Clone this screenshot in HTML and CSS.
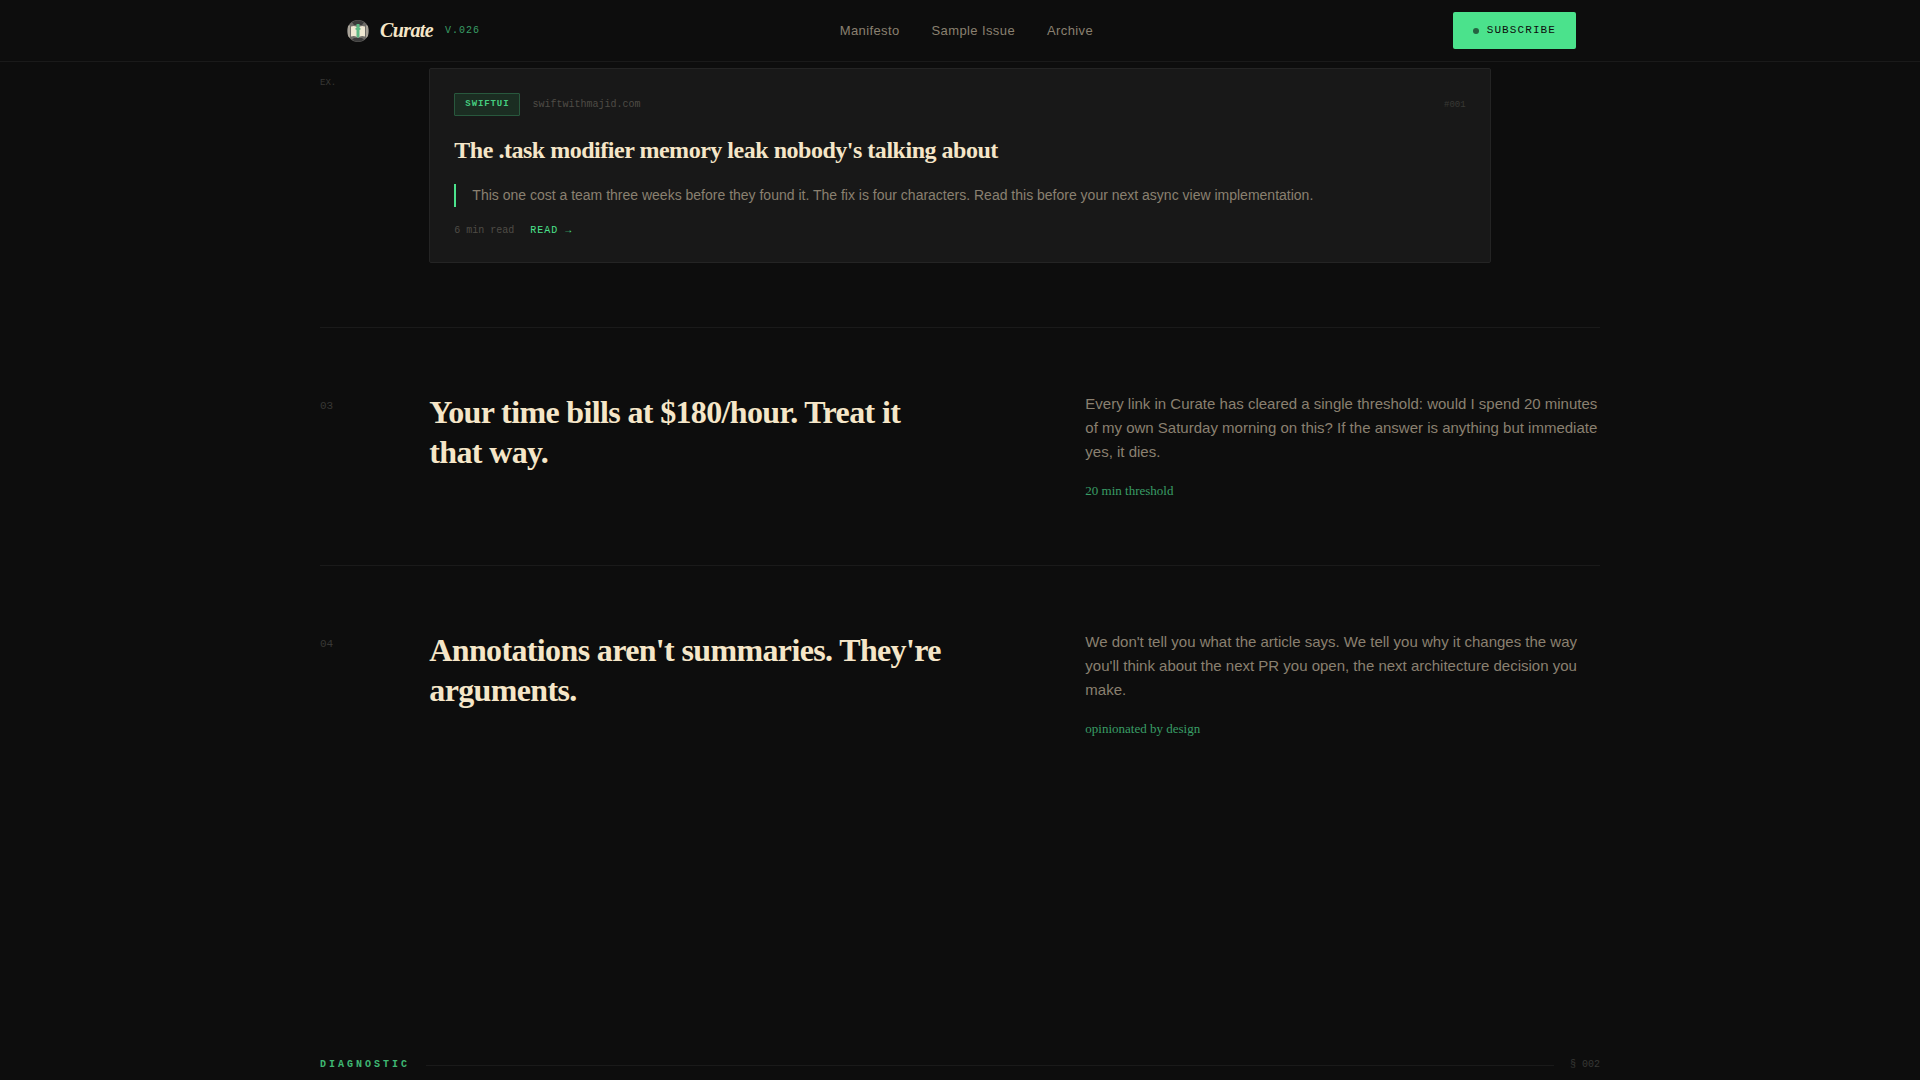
FILE: index.html
```html
<!DOCTYPE html>
<html lang="en">
<head>
<meta charset="utf-8">
<meta name="viewport" content="width=device-width, initial-scale=1">
<title>Curate</title>
<link rel="stylesheet" href="styles.css">
</head>
<body>
<header class="site-header">
  <div class="header-inner">
    <a class="brand" href="#">
      <svg class="brand-mark" viewBox="0 0 28 28" aria-hidden="true">
        <circle cx="14" cy="14" r="11" fill="#6e6c68"/>
        <path d="M8 5.200a11 11 0 0 1 12 0l-2 2.800h-8z" fill="#3a3a3a"/>
        <path d="M8 22.800a11 11 0 0 0 12 0l-2-1.800h-8z" fill="#3c3c3c"/>
        <path d="M4 9l2-1v13l-2-2z" fill="#a9a398"/>
        <path d="M24 9l-2-1v13l2-2z" fill="#a9a398"/>
        <path d="M7 9.500q4-1.500 7 1 3-2.500 7-1v10q-4-1.500-7 1-3-2.500-7-1z" fill="#efe8d2"/>
        <path d="M12.500 7h3v3.500l1.500 1.500-1.500 1v6.500l-1.500 1.500-1.500-1.500v-6.500l-1.500-1 1.500-1.500z" fill="#5cb884"/>
      </svg>
      <span class="brand-name">Curate</span>
      <span class="brand-version">V.026</span>
    </a>
    <nav class="nav">
      <a href="#manifesto">Manifesto</a>
      <a href="#sample">Sample Issue</a>
      <a href="#archive">Archive</a>
    </nav>
    <button class="subscribe" type="button"><span class="dot"></span>SUBSCRIBE</button>
  </div>
</header>
<main class="container">
  <section class="rows" id="manifesto">
    <div class="row row-example">
      <span class="index index-small">EX.</span>
      <article class="card">
        <div class="card-top">
          <span class="tag">SWIFTUI</span>
          <span class="source">swiftwithmajid.com</span>
          <span class="issue">#001</span>
        </div>
        <h3 class="card-title">The .task modifier memory leak nobody's talking about</h3>
        <blockquote class="note">This one cost a team three weeks before they found it. The fix is four characters. Read this before your next async view implementation.</blockquote>
        <div class="card-meta">
          <span class="duration">6 min read</span>
          <a class="read" href="#">READ →</a>
        </div>
      </article>
    </div>
    <div class="row">
      <span class="index">03</span>
      <h2 class="claim">Your time bills at $180/hour. Treat it that way.</h2>
      <div class="reason">
        <p class="body">Every link in Curate has cleared a single threshold: would I spend 20 minutes of my own Saturday morning on this? If the answer is anything but immediate yes, it dies.</p>
        <p class="aside">20 min threshold</p>
      </div>
    </div>
    <div class="row">
      <span class="index">04</span>
      <h2 class="claim">Annotations aren't summaries. They're arguments.</h2>
      <div class="reason">
        <p class="body">We don't tell you what the article says. We tell you why it changes the way you'll think about the next PR you open, the next architecture decision you make.</p>
        <p class="aside">opinionated by design</p>
      </div>
    </div>
  </section>
  <section class="diagnostic">
    <div class="section-label">
      <span class="label-name">DIAGNOSTIC</span>
      <span class="label-rule"></span>
      <span class="label-number">§ 002</span>
    </div>
  </section>
</main>
</body>
</html>
```
FILE: styles.css
```css
:root {
  --bg: #0d0d0d;
  --surface: #181818;
  --line: #1a1a1a;
  --line-strong: #242424;
  --cream: #f5e6c8;
  --muted: #8a8070;
  --dim: #4f4c46;
  --faint: #383835;
  --green: #4be28c;
  --green-soft: #399d66;
  --sans: "Liberation Sans", Arial, sans-serif;
  --serif: "Liberation Serif", "Times New Roman", serif;
  --mono: "Liberation Mono", "Courier New", monospace;
}

* { box-sizing: border-box; }

body, h2, h3, p, blockquote { margin: 0; }

body {
  background: var(--bg);
  color: var(--muted);
  font-family: var(--sans);
}

a { color: inherit; text-decoration: none; }

.container, .header-inner {
  max-width: 1280px;
  margin: 0 auto;
}

.site-header {
  border-bottom: 1px solid var(--line);
}

.header-inner {
  display: flex;
  align-items: center;
  justify-content: space-between;
  padding: 12px 24px;
}

.brand {
  display: flex;
  align-items: center;
}

.brand-mark {
  width: 28px;
  height: 28px;
  margin-right: 8px;
}

.brand-name {
  margin-right: 12px;
  font: italic bold 20px/23px var(--serif);
  letter-spacing: -0.03em;
  color: var(--cream);
}

.brand-version {
  font: 10px/12px var(--mono);
  letter-spacing: 0.1em;
  color: var(--green-soft);
}

.nav {
  display: flex;
  gap: 32px;
  font-size: 13px;
  line-height: 20px;
  letter-spacing: 0.03em;
}

.subscribe {
  display: flex;
  align-items: center;
  gap: 8px;
  height: 37px;
  padding: 0 20px;
  border: 0;
  border-radius: 2px;
  background: var(--green);
  color: var(--bg);
  font: 11px/13px var(--mono);
  letter-spacing: 0.1em;
}

.dot {
  width: 6px;
  height: 6px;
  border-radius: 50%;
  background: #256341;
}

.row {
  display: grid;
  grid-template-columns: repeat(12, 1fr);
  column-gap: 32px;
  padding: 64px 0;
  border-bottom: 1px solid var(--line);
}

.row:last-child { border-bottom: 0; }

.row-example { padding-top: 6px; }

.index {
  padding-top: 8px;
  font: 11px/12px var(--mono);
  color: var(--faint);
}

.index-small {
  font-size: 9px;
  line-height: 14px;
}

.card {
  grid-column: 2 / 12;
  padding: 24px;
  border: 1px solid var(--line-strong);
  border-radius: 2px;
  background: var(--surface);
}

.card-top {
  display: flex;
  align-items: center;
  gap: 12px;
  margin-bottom: 20px;
}

.tag {
  padding: 4px 10px;
  border: 1px solid #28583d;
  border-radius: 1px;
  background: #1b2d22;
  font: bold 9px/13px var(--mono);
  letter-spacing: 0.1em;
  color: #45cc7f;
}

.source {
  font: 10px/12px var(--mono);
  color: var(--dim);
}

.issue {
  margin-left: auto;
  font: 9px/12px var(--mono);
  color: var(--faint);
}

.card-title {
  margin-bottom: 20px;
  font: bold 24px/28px var(--serif);
  letter-spacing: -0.02em;
  color: var(--cream);
}

.note {
  margin-bottom: 16px;
  padding-left: 16px;
  border-left: 2px solid var(--green);
  font-size: 14px;
  line-height: 23px;
}

.card-meta {
  display: flex;
  gap: 16px;
  font: 10px/15px var(--mono);
}

.duration { color: var(--dim); }

.read {
  letter-spacing: 0.1em;
  color: var(--green);
}

.claim {
  grid-column: 2 / 7;
  font: bold 32px/40px var(--serif);
  letter-spacing: -0.02em;
  color: var(--cream);
}

.reason { grid-column: 8 / 13; }

.body {
  margin-bottom: 16px;
  font-size: 15px;
  line-height: 24px;
}

.aside {
  font: 13px/21px var(--serif);
  color: var(--green-soft);
}

.diagnostic {
  padding: 256px 0 8px;
}

.section-label {
  display: flex;
  align-items: center;
  gap: 16px;
  font: 10px/12px var(--mono);
}

.label-name {
  font-weight: bold;
  letter-spacing: 0.3em;
  color: #3fb873;
}

.label-rule {
  flex: 1;
  height: 1px;
  background: var(--line);
}

.label-number { color: var(--faint); }
```
